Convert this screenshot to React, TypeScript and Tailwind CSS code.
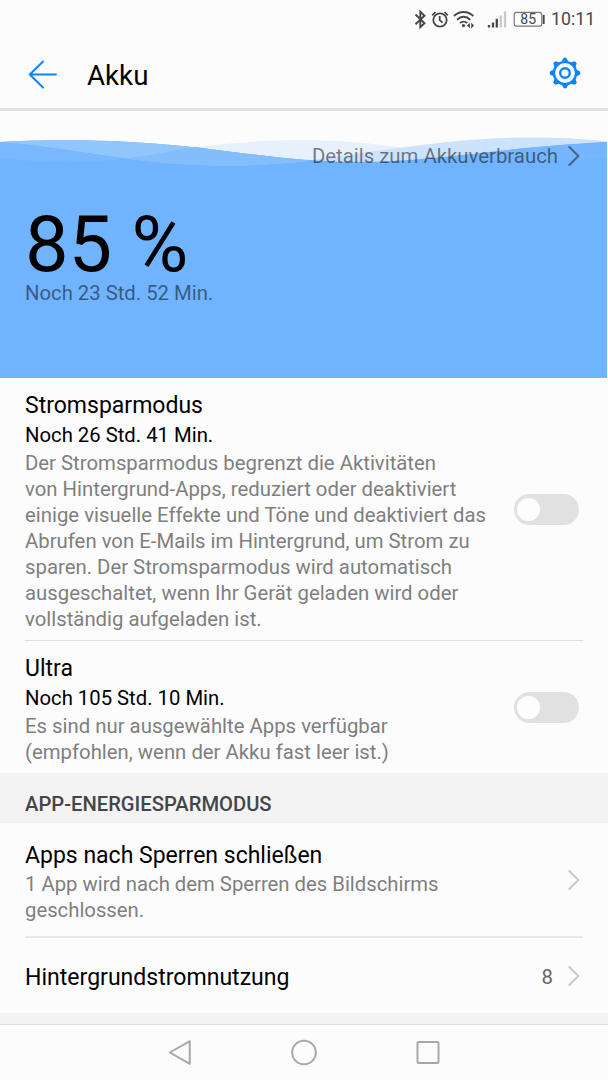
import type { ReactNode } from "react";

const StatusBar = () => (
  <div className="flex h-[37px] items-center justify-end pr-[13px] text-[#45484a]">
    <svg width="132" height="24" viewBox="0 0 132 24" fill="none" aria-hidden="true" className="shrink-0">
      {/* bluetooth */}
      <path d="M1.5 7.5L10.5 16.2L6.3 20.3V4.7L10.5 8.7L1.5 17.3" stroke="currentColor" strokeWidth="1.9" />
      {/* alarm */}
      <circle cx="26" cy="13" r="6.7" stroke="currentColor" strokeWidth="1.8" />
      <path d="M18.2 8.3L21.5 5.2M30.5 5.2L33.8 8.3M25.7 9V13.2L28.5 15.7" stroke="currentColor" strokeWidth="1.8" />
      {/* wifi */}
      <path d="M40 9C45.5 3.6 53.8 3.6 59.3 9M43 12.8C47 8.8 52.3 8.8 56.3 12.8M46 16C48 14.1 51.3 14.1 53.3 16" stroke="currentColor" strokeWidth="1.9" />
      <circle cx="49.5" cy="18.6" r="1.6" fill="currentColor" />
      <path d="M55.9 15.8V21.4L53 18.6ZM57.2 15.8V21.4L60.1 18.6Z" fill="currentColor" />
      {/* signal */}
      <path d="M75 18V20.5M79 15.5V20.5M82.8 11.7V20.5" stroke="currentColor" strokeWidth="2.3" />
      <path d="M86.8 8.5V20.5M91 4.5V20.5" stroke="#c9c9c9" strokeWidth="2.3" />
      {/* battery */}
      <rect x="100.2" y="5.4" width="27.6" height="13.8" rx="2.4" stroke="#777" strokeWidth="1.2" />
      <path d="M129.7 8V17" stroke="currentColor" strokeWidth="1.9" />
      <text x="114.2" y="17.3" textAnchor="middle" fill="currentColor" fontSize="14" fontFamily="Roboto" letterSpacing=".2">85</text>
    </svg>
    <span className="ml-[5px] w-[44px] text-[17.8px] leading-6 whitespace-nowrap">10:11</span>
  </div>
);

const GearIcon = () => (
  <svg width="32" height="32" viewBox="-16 -16 32 32" fill="none" stroke="#0b84ff" aria-hidden="true" className="mt-px">
    <circle r="11.1" strokeWidth="2.4" />
    <circle r="4.8" strokeWidth="2.4" />
    <g fill="#0b84ff" stroke="none">
      {[0, 45, 90, 135, 180, 225, 270, 315].map((angle) => (
        <path key={angle} d="M-3.2 -11.5L-1.7 -14.8Q0 -16 1.7 -14.8L3.2 -11.5Z" transform={`rotate(${angle})`} />
      ))}
    </g>
  </svg>
);

const Chevron = ({ className }: { className: string }) => (
  <svg width="12" height="20" viewBox="0 0 12 20" fill="none" className={className} aria-hidden="true">
    <path d="M1.3 1L10.4 10L1.3 19" stroke="currentColor" strokeWidth="2" strokeLinecap="round" strokeLinejoin="round" />
  </svg>
);

const Toggle = () => (
  <button type="button" role="switch" aria-checked="false" className="mr-[4px] flex h-[31px] w-[65px] shrink-0 items-center rounded-full bg-[#e1e1e1] pl-[3px]">
    <span className="size-[23px] rounded-full bg-[#fdfdfd]" />
  </button>
);

const Waves = () => (
  <svg width="607" height="267" viewBox="0 111 607 267" className="absolute top-0 left-0" aria-hidden="true">
    <path d="M0 158C50 164 90 164 135 157C190 148 235 140 303 140C345 140 375 144 400 147.5C450 155 530 162 607 157V378H0Z" fill="#e7f1fc" />
    <path d="M304 161C350 155 380 150 400 147.8C450 141 490 137.5 530 137.5C560 137.5 585 139 607 141.5V378H304Z" fill="#cce3fe" />
    <path d="M0 142C25 140.5 45 140.2 70 140.2C160 140.2 220 151 275 157C320 162 360 163 405 160.2C460 156 500 150 540 146.8C565 144.5 590 143 607 142V378H0Z" fill="#70b3ff" />
    <path d="M0 142C25 140.5 45 140.2 70 140.2C160 140.2 220 151 275 157C290 158.8 300 159.8 310 160.8C280 164 255 165.7 220 165.5C140 165 85 150 0 142Z" fill="#91c6fd" />
    <path d="M123 158.5C150 156 177 150 195 146.7C222 151 260 155.5 310 160.8C280 164 255 165.7 220 165.5C180 165.3 150 161.5 123 158.5Z" fill="#84bdfc" />
    <path d="M0 142C50 146 90 154 123 158.5C90 163.5 45 163.5 0 158Z" fill="#79b7fe" />
    <path d="M607 142C570 144 535 147 515 149.2C480 154 450 157 425 159C500 163 570 162 607 157Z" fill="#76b6fe" />
  </svg>
);

const BatteryHero = () => (
  <section className="relative mr-px h-[267px] overflow-hidden">
    <Waves />
    <div className="relative flex h-full flex-col px-[25px]">
      <a className="mt-[31px] mr-[2px] flex items-center justify-end gap-[10px] text-[20.35px] leading-[26px] text-black/50">
        <span className="pt-px">Details zum Akkuverbrauch</span>
        <Chevron className="text-[#416587]" />
      </a>
      <div className="mt-[42px] text-[77.6px] leading-[68px] text-black">85 %</div>
      <div className="mt-px text-[20.3px] leading-[26px] text-black/50">Noch 23 Std. 52 Min.</div>
    </div>
  </section>
);

const ModeRow = ({ title, remaining, children, className }: { title: string; remaining: string; children: ReactNode; className: string }) => (
  <div className={`mx-[25px] flex items-center justify-between ${className}`}>
    <div className="pt-[4px]">
      <h2 className="text-[23px] leading-[30px] text-black">{title}</h2>
      <p className="text-[20.3px] leading-[29px] text-black">{remaining}</p>
      <p className="text-[20.34px] leading-[26px] whitespace-nowrap text-[#7f7f7f]">{children}</p>
    </div>
    <Toggle />
  </div>
);

const NavBar = () => (
  <nav className="flex h-[56px] items-center justify-center gap-[98px] border-t border-[#dedede] bg-[#fcfcfc] text-[#a8a8a8]">
    <svg width="26" height="28" viewBox="0 0 26 28" fill="none" stroke="currentColor" strokeWidth="2" strokeLinejoin="round">
      <path d="M22.8 2.2V24.8L2.8 13.5Z" />
    </svg>
    <svg width="26" height="28" viewBox="0 0 26 28" fill="none" stroke="currentColor" strokeWidth="2">
      <circle cx="13" cy="13.5" r="11.8" />
    </svg>
    <svg width="26" height="28" viewBox="0 0 26 28" fill="none" stroke="currentColor" strokeWidth="2">
      <rect x="2.5" y="3" width="21" height="21" rx=".8" />
    </svg>
  </nav>
);

const App = () => (
  <div className="flex h-[1080px] w-[608px] flex-col overflow-hidden bg-[#fcfcfc] font-['Roboto',sans-serif]">
    <StatusBar />
    <header className="flex h-[74px] items-center border-b-[3px] border-[#e0e0e0] pr-[27px] pl-[28px]">
      <svg width="30" height="30" viewBox="0 0 30 30" fill="none" stroke="#0b84ff" strokeWidth="2" strokeLinecap="round" strokeLinejoin="round" aria-hidden="true" className="mt-[4px]">
        <path d="M15 1.5L1.8 14.5L15 27.5M2 14.5H28" />
      </svg>
      <h1 className="ml-[29px] flex-1 pt-[6px] text-[27.7px] leading-[36px] text-black">Akku</h1>
      <GearIcon />
    </header>

    <BatteryHero />

    <ModeRow title="Stromsparmodus" remaining="Noch 26 Std. 41 Min." className="h-[262px]">
      Der Stromsparmodus begrenzt die Aktivitäten
      <br />
      von Hintergrund-Apps, reduziert oder deaktiviert
      <br />
      einige visuelle Effekte und Töne und deaktiviert das
      <br />
      Abrufen von E-Mails im Hintergrund, um Strom zu
      <br />
      sparen. Der Stromsparmodus wird automatisch
      <br />
      ausgeschaltet, wenn Ihr Gerät geladen wird oder
      <br />
      vollständig aufgeladen ist.
    </ModeRow>
    <div className="mx-[25px] h-px bg-[#e0e0e0]" />
    <ModeRow title="Ultra" remaining="Noch 105 Std. 10 Min." className="h-[132px]">
      Es sind nur ausgewählte Apps verfügbar
      <br />
      (empfohlen, wenn der Akku fast leer ist.)
    </ModeRow>

    <div className="flex h-[50px] items-center bg-[#f3f3f3] px-[25px] pt-[12px] text-[20.2px] leading-[26px] font-medium text-[#434648]">
      APP-ENERGIESPARMODUS
    </div>

    <div className="mx-[25px] flex h-[115px] items-center justify-between border-b-2 border-[#e8e8e8] pr-[3px]">
      <div className="pt-[4px]">
        <h2 className="text-[23px] leading-[30px] text-black">Apps nach Sperren schließen</h2>
        <p className="text-[20.3px] leading-[26px] text-[#7f7f7f]">
          1 App wird nach dem Sperren des Bildschirms
          <br />
          geschlossen.
        </p>
      </div>
      <Chevron className="text-[#c8c8c8]" />
    </div>
    <div className="mx-[25px] flex h-[75px] items-center pr-[3px]">
      <h2 className="flex-1 pt-[4px] text-[23.05px] leading-[30px] text-black">Hintergrundstromnutzung</h2>
      <span className="mr-[15px] pt-[2px] text-[20.3px] leading-[26px] text-[#666]">8</span>
      <Chevron className="text-[#c8c8c8]" />
    </div>
    <div className="h-[11px] bg-[#f3f3f3]" />
    <NavBar />
  </div>
);

export default App;
